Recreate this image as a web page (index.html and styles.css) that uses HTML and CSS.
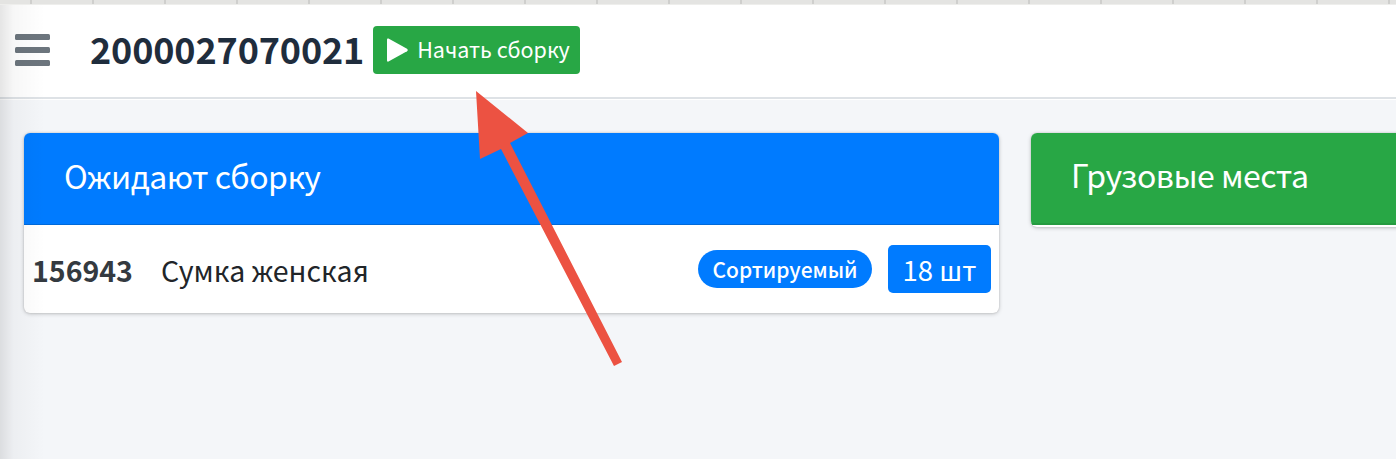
FILE: index.html
```html
<!DOCTYPE html>
<html lang="ru">
<head>
<meta charset="utf-8">
<title>Сборка</title>
<link rel="stylesheet" href="styles.css">
</head>
<body>
<div class="page">
  <div class="sheet-strip"></div>
  <header class="topbar">
    <button class="menu-btn" aria-label="Меню">
      <svg width="35" height="32" viewBox="0 0 35 32"><rect y="0" width="35" height="6" rx="1.5"/><rect y="13" width="35" height="6" rx="1.5"/><rect y="26" width="35" height="6" rx="1.5"/></svg>
    </button>
    <h1 class="doc-number">2000027070021</h1>
    <a class="start-btn">
      <svg width="21" height="24" viewBox="0 0 21 24"><path d="M1.5 0.5 L20 10.7 Q21.500 12 20 13.300 L1.500 23.500 Q0 24 0 22.500 V1.500 Q0 0 1.500 0.500Z"/></svg>
      <span>Начать сборку</span>
    </a>
  </header>
  <main class="board">
    <section class="card">
      <h2 class="card-head head-blue">Ожидают сборку</h2>
      <div class="item">
        <strong class="item-code">156943</strong>
        <span class="item-name">Сумка женская</span>
        <span class="pill">Сортируемый</span>
        <span class="qty">18 шт</span>
      </div>
    </section>
    <section class="card card-empty">
      <h2 class="card-head head-green">Грузовые места</h2>
    </section>
  </main>
  <div class="edge-shade"></div>
  <svg class="arrow" width="1396" height="459" viewBox="0 0 1396 459"><polygon points="476,91 528,133 510,143 622,362 614,366 501,149 480,159"/></svg>
</div>
</body>
</html>
```
FILE: styles.css
```css
* { box-sizing: border-box; }
html, body { margin: 0; height: 100%; }
body {
  font-family: "Noto Sans CJK SC", "Noto Sans", sans-serif;
  background: #f4f6f9;
  color: #212529;
  overflow: hidden;
}
.page { position: relative; width: 1396px; height: 459px; overflow: hidden; }
.sheet-strip {
  height: 5px;
  border-bottom: 1px solid #eeeeec;
  background-color: #e4e4e2;
  background-image:
    linear-gradient(90deg, transparent 30px, #cfcfcd 30px 32px, transparent 32px),
    repeating-linear-gradient(90deg, #cfcfcd 0 2px, transparent 2px 72px);
  background-size: 100% 100%, calc(100% - 92px) 100%;
  background-position: 0 0, right 0;
  background-repeat: no-repeat;
}
.topbar {
  height: 94px;
  background: #fff;
  border-bottom: 2px solid #dee2e6;
  box-shadow: 0 1px 0 #fff;
  display: flex;
  align-items: center;
  padding: 0 0 3px 15px;
}
.menu-btn {
  border: 0; padding: 0; background: none; display: flex; margin-right: 40px;
}
.menu-btn svg { fill: #6c757d; }
.doc-number {
  margin: 0 9px 4px 0;
  font-size: 36px;
  line-height: 44px;
  font-weight: 700;
  letter-spacing: -0.15px;
  color: #1f2d3d;
}
.start-btn {
  display: flex;
  align-items: center;
  gap: 9px;
  height: 48px;
  width: 207px;
  padding: 0 0 0 14px;
  background: #28a745;
  border-radius: 4px;
  color: #fff;
  font-size: 21.5px;
}
.start-btn span { margin-top: -2px; }
.start-btn svg { fill: #fff; flex: none; }
.board {
  display: grid;
  grid-template-columns: 975px 975px;
  gap: 32px;
  align-items: start;
  padding: 34px 0 0 24px;
}
.card {
  background: #fff;
  border-radius: 6px;
  overflow: hidden;
  box-shadow: 0 0 2px rgba(0,0,0,.15), 0 1px 4px rgba(0,0,0,.2);
}
.card-head {
  margin: 0;
  height: 92px;
  padding: 0 40px 8px;
  display: flex;
  align-items: center;
  font-size: 32px;
  letter-spacing: -0.5px;
  font-weight: 400;
  color: #fff;
}
.head-blue { background: #007bff; border-bottom: 1px solid #0069d9; }
.head-green { background: #28a745; border-bottom: 2px solid #259b40; }
.card-empty { padding-bottom: 2px; }
.item {
  height: 88px;
  display: flex;
  align-items: center;
  padding: 0 8px;
  font-size: 28.5px;
  color: #343a40;
}
.item-code { font-weight: 700; margin-right: 28px; }
.item-name { color: #212529; flex: 1; }
.pill {
  display: flex;
  align-items: center;
  justify-content: center;
  width: 174px;
  height: 38px;
  background: #007bff;
  color: #fff;
  border-radius: 19px;
  font-size: 21px;
  font-weight: 500;
  margin-right: 16px;
}
.qty {
  display: flex;
  align-items: center;
  justify-content: center;
  width: 103px;
  height: 48px;
  background: #007bff;
  color: #fff;
  border-radius: 5px;
  font-size: 27.5px;
}
.edge-shade {
  position: absolute;
  left: 0; top: 5px; bottom: 0;
  width: 45px;
  background: linear-gradient(90deg, rgba(0,0,0,.1), rgba(0,0,0,.03) 30%, rgba(0,0,0,0));
  pointer-events: none;
}
.arrow { position: absolute; left: 0; top: 0; fill: #ec5242; pointer-events: none; }
```
